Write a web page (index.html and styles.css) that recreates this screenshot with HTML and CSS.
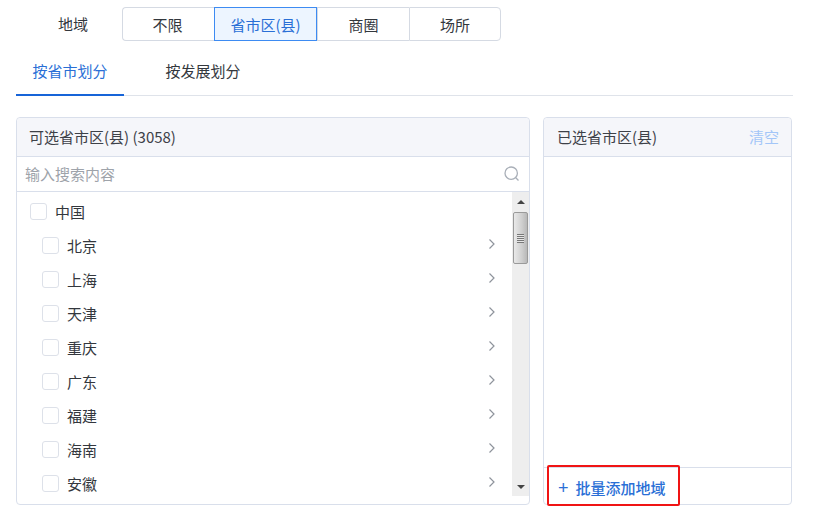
FILE: index.html
```html
<!DOCTYPE html>
<html lang="zh-CN">
<head>
<meta charset="utf-8">
<title>地域</title>
<link rel="stylesheet" href="styles.css">
</head>
<body>
<div class="page">
  <div class="region">
    <div class="region-label">地域</div>
    <div class="segments">
      <div class="seg w92">不限</div>
      <div class="seg w103 active">省市区(县)</div>
      <div class="seg w92">商圈</div>
      <div class="seg w92 last">场所</div>
    </div>
  </div>
  <div class="tabs">
    <div class="tab active">按省市划分</div>
    <div class="tab">按发展划分</div>
  </div>
  <div class="panels">
    <section class="panel left">
      <div class="head">可选省市区(县) (3058)</div>
      <div class="search">
        <span class="placeholder">输入搜索内容</span>
        <svg class="search-icon" width="18" height="18" viewBox="0 0 18 18"><circle cx="8.2" cy="8.2" r="6.2" fill="none" stroke="#a9afb8" stroke-width="1.3"/><path d="M12.8 12.8l2.7 2.7" fill="none" stroke="#a9afb8" stroke-width="1.3"/></svg>
      </div>
      <div class="body">
        <div class="tree">
          <div class="row root"><span class="check"></span><span class="name">中国</span></div>
          <div class="row"><span class="check"></span><span class="name">北京</span><svg class="chev" width="8" height="12" viewBox="0 0 8 12"><path d="M1.5 1.5l4.5 4.5-4.5 4.5" fill="none" stroke="#8f949c" stroke-width="1.2"/></svg></div>
          <div class="row"><span class="check"></span><span class="name">上海</span><svg class="chev" width="8" height="12" viewBox="0 0 8 12"><path d="M1.5 1.5l4.5 4.5-4.5 4.5" fill="none" stroke="#8f949c" stroke-width="1.2"/></svg></div>
          <div class="row"><span class="check"></span><span class="name">天津</span><svg class="chev" width="8" height="12" viewBox="0 0 8 12"><path d="M1.5 1.5l4.5 4.5-4.5 4.5" fill="none" stroke="#8f949c" stroke-width="1.2"/></svg></div>
          <div class="row"><span class="check"></span><span class="name">重庆</span><svg class="chev" width="8" height="12" viewBox="0 0 8 12"><path d="M1.5 1.5l4.5 4.5-4.5 4.5" fill="none" stroke="#8f949c" stroke-width="1.2"/></svg></div>
          <div class="row"><span class="check"></span><span class="name">广东</span><svg class="chev" width="8" height="12" viewBox="0 0 8 12"><path d="M1.5 1.5l4.5 4.5-4.5 4.5" fill="none" stroke="#8f949c" stroke-width="1.2"/></svg></div>
          <div class="row"><span class="check"></span><span class="name">福建</span><svg class="chev" width="8" height="12" viewBox="0 0 8 12"><path d="M1.5 1.5l4.5 4.5-4.5 4.5" fill="none" stroke="#8f949c" stroke-width="1.2"/></svg></div>
          <div class="row"><span class="check"></span><span class="name">海南</span><svg class="chev" width="8" height="12" viewBox="0 0 8 12"><path d="M1.5 1.5l4.5 4.5-4.5 4.5" fill="none" stroke="#8f949c" stroke-width="1.2"/></svg></div>
          <div class="row"><span class="check"></span><span class="name">安徽</span><svg class="chev" width="8" height="12" viewBox="0 0 8 12"><path d="M1.5 1.5l4.5 4.5-4.5 4.5" fill="none" stroke="#8f949c" stroke-width="1.2"/></svg></div>
        </div>
        <div class="scrollbar">
          <div class="arrow up"></div>
          <div class="thumb"><span class="grip"></span></div>
          <div class="arrow down"></div>
        </div>
      </div>
    </section>
    <section class="panel right">
      <div class="head split"><span>已选省市区(县)</span><span class="clear">清空</span></div>
      <div class="selected"></div>
      <div class="foot"><span class="plus">+</span><span>批量添加地域</span></div>
      <div class="highlight"></div>
    </section>
  </div>
</div>
</body>
</html>
```
FILE: styles.css
```css
* { box-sizing: border-box; }
html, body { margin: 0; padding: 0; background: #fff; }
body {
  width: 813px;
  height: 520px;
  overflow: hidden;
  font-family: "Noto Sans CJK SC", "Liberation Sans", sans-serif;
  font-size: 15px;
  color: #33373d;
}
.page { padding: 7px 20px 0 16px; }
.region { display: flex; align-items: center; height: 34px; }
.region-label { width: 106px; padding-left: 42px; line-height: 34px; }
.segments { display: flex; height: 34px; }
.seg {
  display: flex;
  align-items: center;
  justify-content: center;
  height: 34px;
  border: 1px solid #d5dae3;
  border-right: 0;
  background: #fff;
}
.seg:first-child { border-radius: 4px 0 0 4px; padding-right: 2px; }
.seg.last { border-right: 1px solid #d5dae3; border-radius: 0 4px 4px 0; }
.w92 { width: 92px; }
.w103 { width: 103px; }
.seg.active {
  border: 1px solid #3d8bf2;
  background: #edf5ff;
  color: #2a6fd6;
}
.tabs {
  display: flex;
  height: 48px;
  width: 777px;
  margin-top: 7px;
  border-bottom: 1px solid #dfe3ea;
}
.tab {
  width: 108px;
  height: 48px;
  margin-right: 25px;
  padding-top: 12px;
  line-height: 22px;
  text-align: center;
}
.tab.active {
  color: #2a6fd6;
  border-bottom: 2px solid #1764d8;
}
.panels { display: flex; gap: 13px; margin-top: 21px; }
.panel {
  position: relative;
  height: 388px;
  border: 1px solid #d9dfeb;
  border-radius: 4px;
  background: #fff;
  display: flex;
  flex-direction: column;
}
.panel.left { width: 514px; }
.panel.right { width: 249px; }
.head {
  flex: none;
  height: 39px;
  padding-left: 12px;
  line-height: 38px;
  background: #f5f6fa;
  border-bottom: 1px solid #d9dfeb;
  border-radius: 4px 4px 0 0;
  color: #3d4148;
}
.head.split { display: flex; justify-content: space-between; padding: 0 12px 0 13px; }
.clear { color: #a3c6f8; }
.search {
  flex: none;
  height: 35px;
  display: flex;
  align-items: center;
  justify-content: space-between;
  padding: 0 8px 0 8px;
  border-bottom: 1px solid #d9dfeb;
}
.placeholder { color: #9ea3aa; margin-top: -2px; }
.search-icon { margin-top: -1px; }
.body { flex: 1; display: flex; min-height: 0; }
.tree { flex: 1; padding-top: 3px; min-width: 0; }
.row {
  display: flex;
  align-items: center;
  height: 34px;
  padding-left: 25px;
  padding-right: 16px;
}
.row.root { padding-left: 13px; }
.check {
  flex: none;
  width: 17px;
  height: 17px;
  margin-right: 8px;
  border: 1px solid #dde1e9;
  border-radius: 3px;
  background: #fff;
  margin-top: -1px;
}
.row.root .check { margin-right: 8px; }
.name { flex: 1; margin-top: -2px; }
.chev { flex: none; margin-top: -5px; }
.scrollbar {
  flex: none;
  width: 17px;
  height: 304px;
  background: #eeeeee;
  position: relative;
  display: flex;
  flex-direction: column;
  align-items: center;
}
.arrow { width: 0; height: 0; border-left: 4px solid transparent; border-right: 4px solid transparent; }
.arrow.up { position: absolute; top: 8px; border-bottom: 4px solid #444; }
.arrow.down { position: absolute; bottom: 7px; border-top: 4px solid #444; }
.thumb {
  position: absolute;
  top: 20px;
  left: 1px;
  width: 15px;
  height: 52px;
  border: 1px solid #9a9a9a;
  border-radius: 2px;
  background: linear-gradient(90deg, #e9e9e9, #cfcfcf 60%, #b8b8b8);
  display: flex;
  align-items: center;
  justify-content: center;
}
.grip {
  display: block;
  width: 7px;
  height: 9px;
  background: repeating-linear-gradient(180deg, #777 0 1px, #e6e6e6 1px 2px);
}
.selected { flex: 1; }
.foot {
  flex: none;
  height: 37px;
  display: flex;
  align-items: center;
  gap: 7px;
  padding-left: 14px;
  padding-top: 3px;
  border-top: 1px solid #d9dfeb;
  color: #2a6fd6;
  line-height: 32px;
  font-weight: 500;
}
.plus { font-size: 18px; font-family: "Liberation Sans", sans-serif; font-weight: 400; }
.highlight {
  position: absolute;
  left: 3px;
  bottom: -2px;
  width: 133px;
  height: 41px;
  border: 2px solid #f01414;
  border-radius: 2px;
}
```
